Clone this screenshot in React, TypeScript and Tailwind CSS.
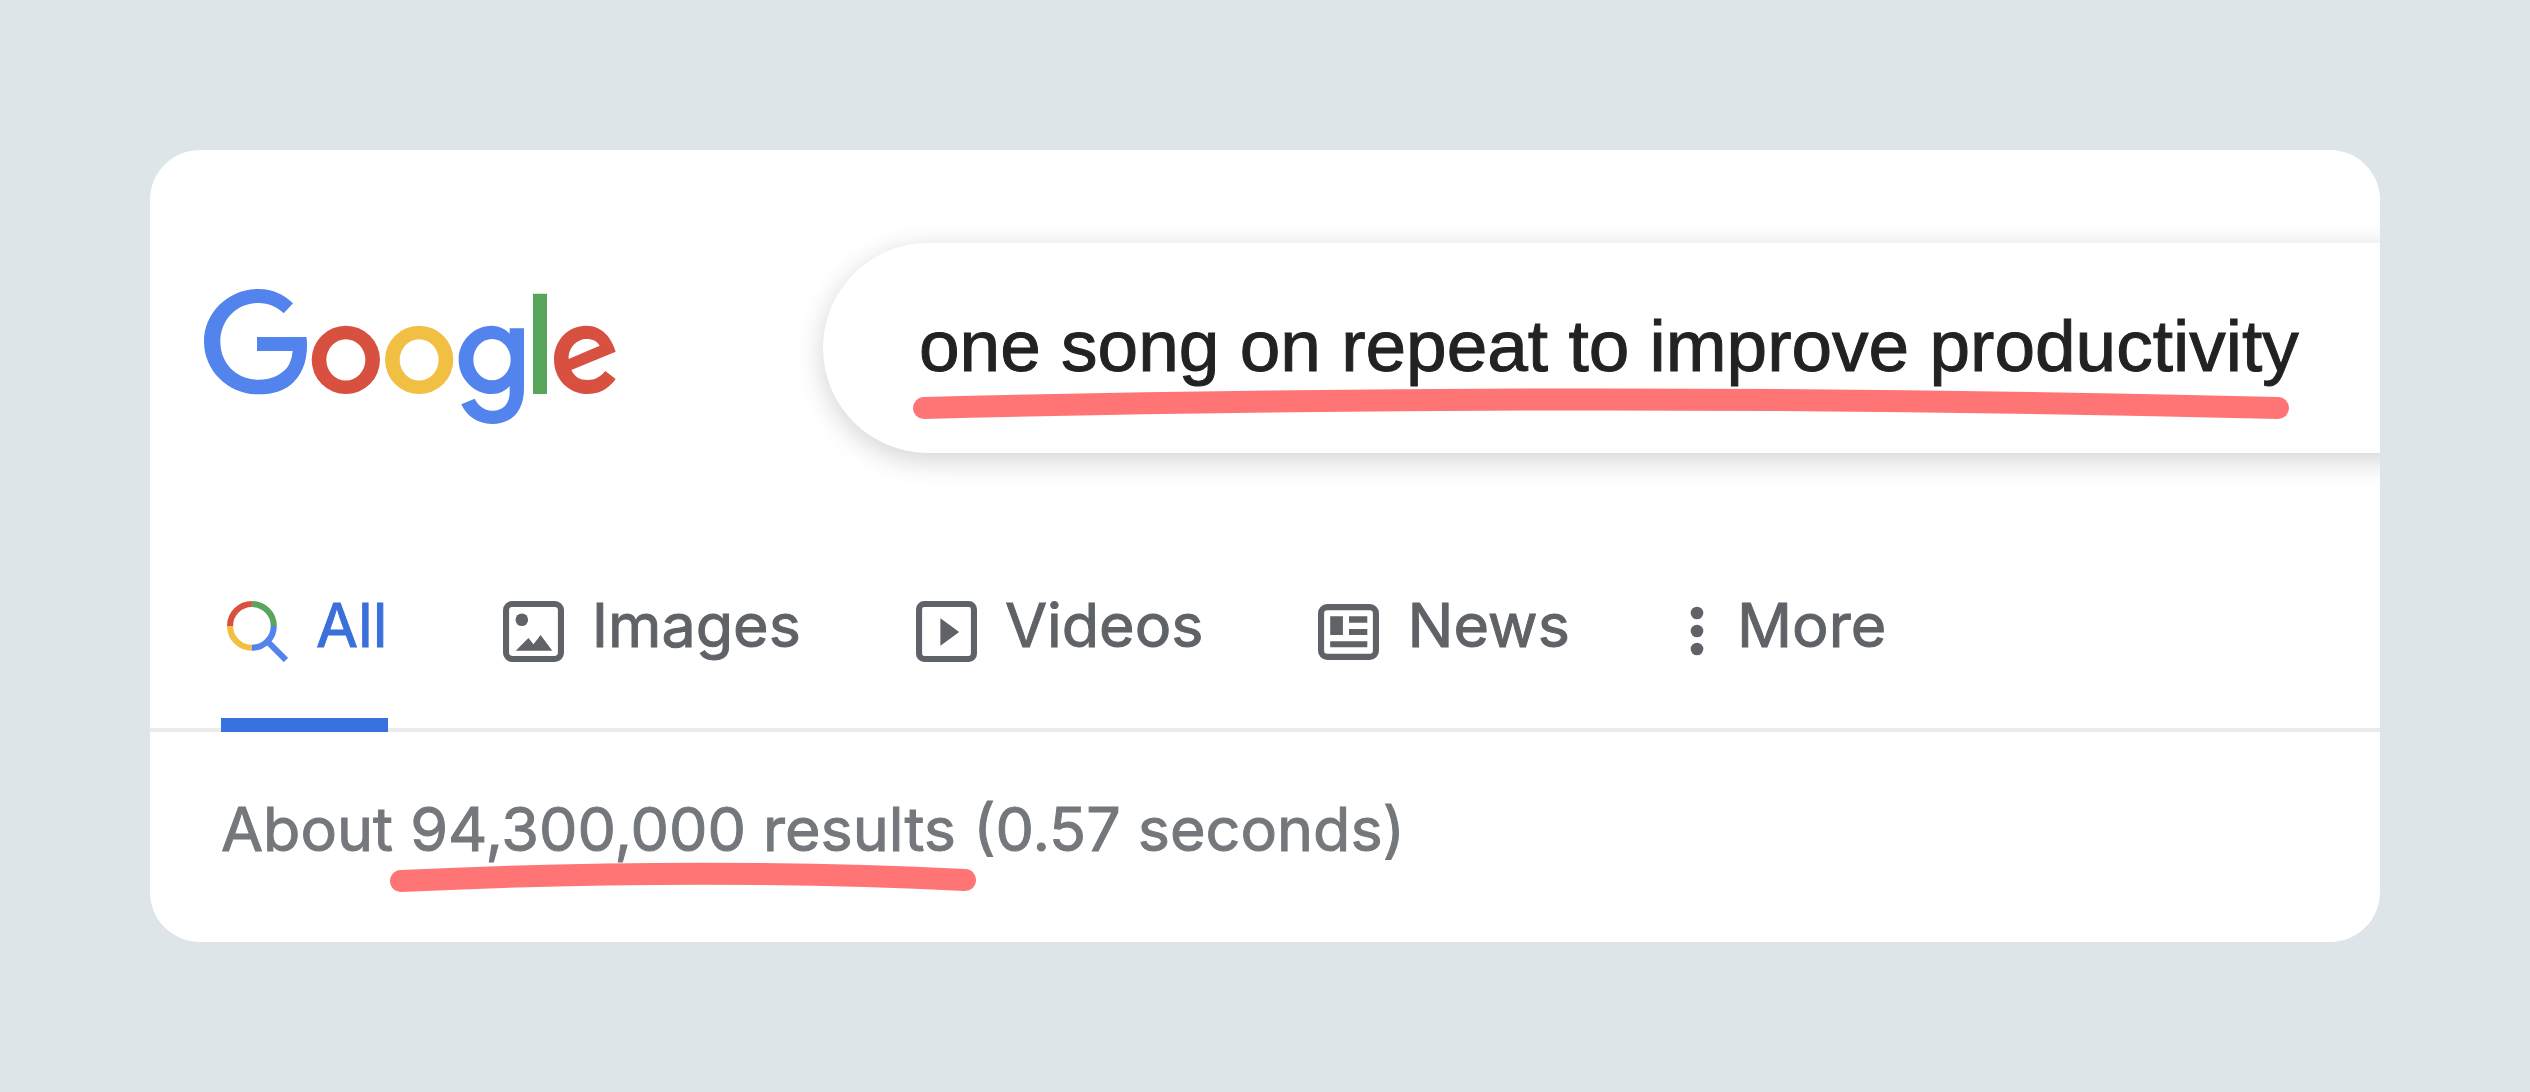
import type { ReactNode } from "react";

const QUERY = "one song on repeat to improve productivity";

function GoogleLogo() {
    return (
        <svg viewBox="0 0 1236 405" className="w-[412px] shrink-0" role="img" aria-label="Google">
            <g fillRule="evenodd">
                <path
                    fill="#5383ec"
                    d="M267 43L239 73C219 54 194 42 163 42C98 42 49 93 49 158C49 223 98 272 163 272C208 272 234 253 249 236C258 224 264 208 266 186H159V144H307C309 152 309 160 309 170C309 205 300 248 270 278C242 306 208 316 163 316C74 316 0 246 0 158C0 70 74 0 163 0C208 0 240 17 267 43Z"
                />
                <path
                    fill="#d85140"
                    d="M323 212.500A102.500 102.500 0 1 1 528 212.500A102.500 102.500 0 1 1 323 212.500ZM367 212.500A58.500 62 0 1 0 484 212.500A58.500 62 0 1 0 367 212.500Z"
                />
                <path
                    fill="#f1bf42"
                    d="M543 212.500A102.500 102.500 0 1 1 748 212.500A102.500 102.500 0 1 1 543 212.500ZM587 212.500A58.500 62 0 1 0 704 212.500A58.500 62 0 1 0 587 212.500Z"
                />
                <path
                    fill="#5383ec"
                    d="M960 118H917V134C905 121 887 110 863 110C810 110 764 155 764 212C764 269 810 315 863 315C887 315 905 305 917 291V308C917 345 897 365 865 365C839 365 821 347 812 329L772 346C786 378 818 405 864 405C917 405 960 374 960 298ZM808 212A56 62 0 1 0 920 212A56 62 0 1 0 808 212Z"
                />
                <path fill="#58a55c" d="M987 14H1029V315H987Z" />
                <path
                    fill="#d85140"
                    d="M1235 188L1102 243C1112 264 1128 273 1150 273C1174 273 1190 263 1204 246L1235 270C1224 286 1198 315 1152 315C1093 315 1050 270 1050 212C1050 152 1094 110 1146 110C1198 110 1222 152 1230 174ZM1094 210L1187 170C1181 158 1166 150 1148 150C1121 150 1093 173 1094 210Z"
                />
            </g>
        </svg>
    );
}

function SearchIcon() {
    return (
        <svg viewBox="0 0 60 60" className="size-[61px] shrink-0" fill="none" strokeWidth="6" aria-hidden="true">
            <path d="M3 24.500A21.500 21.500 0 0 1 24.500 3" stroke="#d85140" />
            <path d="M24.500 3A21.500 21.500 0 0 1 46 24.500" stroke="#58a55c" />
            <path d="M24.500 46A21.500 21.500 0 0 1 3 24.500" stroke="#f1bf42" />
            <path d="M46 24.500A21.500 21.500 0 0 1 24.500 46M39 39L58 58" stroke="#5383ec" />
        </svg>
    );
}

function ImagesIcon() {
    return (
        <svg viewBox="0 0 60 60" className="size-[61px] shrink-0" fill="currentColor" aria-hidden="true">
            <rect x="3" y="3" width="54" height="54" rx="6" fill="none" stroke="currentColor" strokeWidth="6" />
            <circle cx="18.500" cy="18.500" r="6.200" />
            <path d="M12.500 49L25 36.500L30 42.500L37 33.500L48.500 49Z" />
        </svg>
    );
}

function VideosIcon() {
    return (
        <svg viewBox="0 0 60 60" className="size-[61px] shrink-0" fill="currentColor" aria-hidden="true">
            <rect x="3" y="3" width="54" height="54" rx="5" fill="none" stroke="currentColor" strokeWidth="6" />
            <path d="M24 17L42.500 30.500L24 44Z" />
        </svg>
    );
}

function NewsIcon() {
    return (
        <svg viewBox="0 0 60 60" className="size-[61px] shrink-0" fill="currentColor" aria-hidden="true">
            <rect x="3" y="6" width="54" height="49" rx="6" fill="none" stroke="currentColor" strokeWidth="6" />
            <path d="M12 15H24.500V33.500H12ZM30.500 15H48.500V21.500H30.500ZM30.500 27.500H48.500V33.500H30.500ZM12 39.500H48.500V45.500H12Z" />
        </svg>
    );
}

function MoreIcon() {
    return (
        <svg viewBox="0 0 24 60" className="h-[60px] w-6 shrink-0" fill="currentColor" aria-hidden="true">
            <circle cx="12" cy="12" r="6.300" />
            <circle cx="12" cy="30" r="6.300" />
            <circle cx="12" cy="48" r="6.300" />
        </svg>
    );
}

// Icon and caption of one tab; the caption sits a little above the icon's centre
function TabLabel({ icon, children }: { icon: ReactNode; children: ReactNode }) {
    return (
        <span className="flex items-center gap-7">
            {icon}
            <span className="pb-3 text-[61px] leading-[66px] [-webkit-text-stroke:1px_currentColor]">{children}</span>
        </span>
    );
}

const TABS = [
    { label: "Images", icon: <ImagesIcon /> },
    { label: "Videos", icon: <VideosIcon /> },
    { label: "News", icon: <NewsIcon /> },
];

export default function App() {
    return (
        <main className="min-h-screen bg-[#dde5e8] p-[150px] font-['Inter',sans-serif]">
            <div className="overflow-hidden rounded-[50px] bg-white pb-20">
                <header className="flex items-center pt-[93px] pl-[54px]">
                    <a href="#home" className="mt-4 mr-[207px] shrink-0">
                        <GoogleLogo />
                    </a>
                    {/* The search box runs on past the card's right edge */}
                    <form
                        role="search"
                        className="relative -mr-12 flex h-[210px] flex-1 rounded-l-full bg-white shadow-[0_7px_28px_rgba(0,0,0,0.18)]"
                    >
                        <input
                            type="text"
                            aria-label="Search"
                            defaultValue={QUERY}
                            className="min-w-0 flex-1 bg-transparent pb-1 pl-24 font-['Liberation_Sans',Arial,sans-serif] text-[73px] text-[#222222] outline-none [-webkit-text-stroke:1px_#222222]"
                        />
                        {/* Marker stroke under the query */}
                        <svg
                            viewBox="0 0 1376 40"
                            className="pointer-events-none absolute top-[142px] left-[90px] w-[1376px]"
                            aria-hidden="true"
                        >
                            <path d="M11 23Q688 6 1365 23" fill="none" stroke="#ff7575" strokeWidth="22" strokeLinecap="round" />
                        </svg>
                    </form>
                </header>

                <nav className="flex gap-[115px] border-b-4 border-[#ebebeb] pt-[139px] pl-[71px] text-[#5f6368]">
                    <a
                        href="#all"
                        aria-current="page"
                        className="-mb-1 border-b-[14px] border-[#3871e0] pb-12 pl-1.5 text-[#3b70da]"
                    >
                        <TabLabel icon={<SearchIcon />}>All</TabLabel>
                    </a>
                    {TABS.map((tab) => (
                        <a key={tab.label} href={`#${tab.label.toLowerCase()}`}>
                            <TabLabel icon={tab.icon}>{tab.label}</TabLabel>
                        </a>
                    ))}
                    <button type="button" className="self-start">
                        <TabLabel icon={<MoreIcon />}>More</TabLabel>
                    </button>
                </nav>

                <p className="pt-16 pl-[71px] text-[61px] leading-[66px] text-[#74777b] [-webkit-text-stroke:1px_currentColor]">
                    About{" "}
                    <span className="relative inline-block">
                        94,300,000 results
                        <svg
                            viewBox="0 0 586 30"
                            className="pointer-events-none absolute top-[66px] -left-5 w-[586px] max-w-none"
                            aria-hidden="true"
                        >
                            <path d="M11 19Q310 5 575 18" fill="none" stroke="#ff7575" strokeWidth="22" strokeLinecap="round" />
                        </svg>
                    </span>{" "}
                    (0.57 seconds)
                </p>
            </div>
        </main>
    );
}
